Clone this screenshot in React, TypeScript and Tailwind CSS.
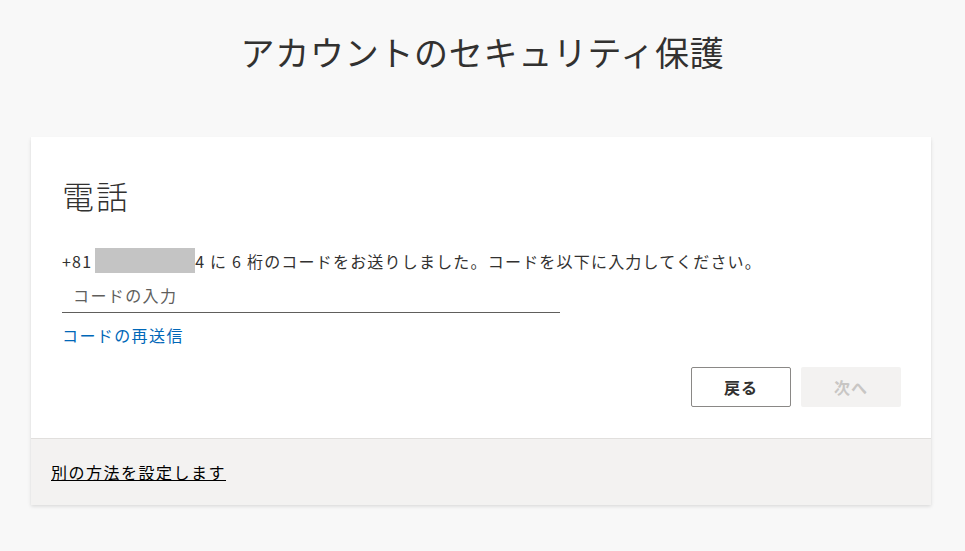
import React from "react";

export default function App() {
  const font = { fontFamily: '"Noto Sans CJK JP", "Noto Sans", sans-serif' };
  return (
    <div className="min-h-[551px] w-full bg-[#f8f8f8] text-[#323130]" style={font}>
      <div className="flex justify-center pt-[30px]">
        <h1 className="text-[34px] leading-[44px] font-normal tracking-[0.7px]">アカウントのセキュリティ保護</h1>
      </div>
      <div className="ml-[31px] w-[900px] mt-[63px] bg-white shadow-[0_1.6px_3.6px_rgba(0,0,0,0.13),0_0.3px_0.9px_rgba(0,0,0,0.11)]">
        <div className="pl-[31px] pr-[30px] pt-[36px] pb-[31px]">
          <h2 className="text-[32px] leading-[44px] font-light tracking-[2px]">電話</h2>
          <p className="mt-[31px] text-[16px] leading-[24px] flex items-center tracking-[1.2px]">
            <span>+81</span>
            <span className="inline-block ml-[3px] w-[100px] h-[25px] bg-[#c4c4c4]"></span>
            <span>4 に 6 桁のコードをお送りしました。コードを以下に入力してください。</span>
          </p>
          <div className="mt-[5px] w-[498px] border-b border-[#605e5c] h-[35px] flex items-center px-[11px] text-[16px] text-[#605e5c] tracking-[1.4px]">
            コードの入力
          </div>
          <div className="mt-[10px] text-[16px] leading-[24px] text-[#0067b8] tracking-[1.4px]">コードの再送信</div>
          <div className="mt-[20px] flex justify-end gap-[10px]">
            <button className="w-[100px] h-[40px] border border-[#8a8886] rounded-[2px] bg-white text-[16px] font-bold text-[#323130] tracking-[1px]">戻る</button>
            <button className="w-[100px] h-[40px] rounded-[2px] bg-[#f3f2f1] text-[16px] font-bold text-[#c8c6c4] tracking-[1px]">次へ</button>
          </div>
        </div>
        <div className="bg-[#f3f2f1] border-t border-[#e1dfdd] h-[67px] flex items-center px-[20px]">
          <span className="text-[16px] underline text-black tracking-[1.5px]">別の方法を設定します</span>
        </div>
      </div>
    </div>
  );
}
